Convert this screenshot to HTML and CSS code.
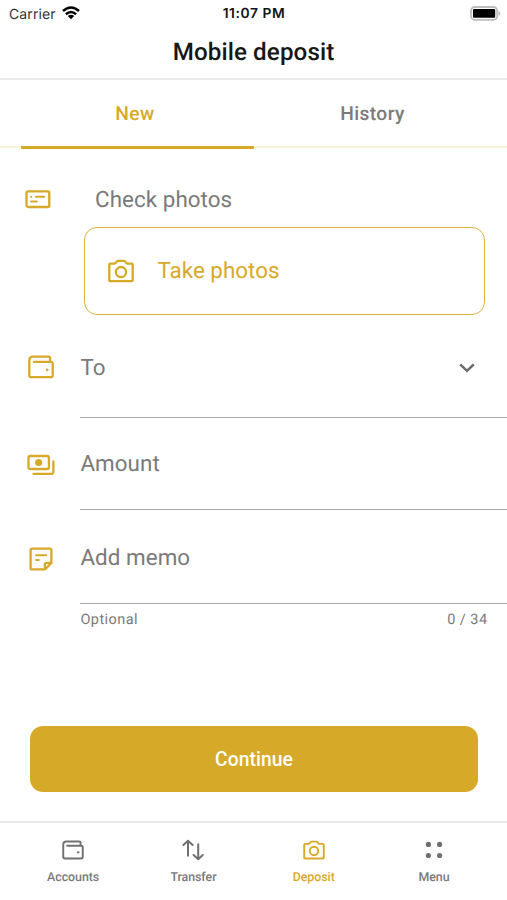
FILE: index.html
```html
<!DOCTYPE html>
<html lang="en">
<head>
<meta charset="utf-8">
<title>Mobile deposit</title>
<link rel="stylesheet" href="styles.css">
</head>
<body>
<svg class="defs" width="0" height="0" aria-hidden="true">
  <symbol id="camera" viewBox="0 0 26 24">
    <path d="M2.3 4.6H6.2Q7.6 4.6 8.2 3.3Q8.8 1.9 10.2 1.9H15.8Q17.2 1.9 17.8 3.3Q18.4 4.6 19.8 4.6H23.7Q24.7 4.6 24.7 5.6V21.2Q24.7 22.2 23.7 22.2H2.3Q1.3 22.2 1.3 21.2V5.6Q1.3 4.6 2.3 4.6Z"/>
    <circle cx="13" cy="13.1" r="5.1"/>
  </symbol>
  <symbol id="wallet" viewBox="0 0 26 24">
    <path d="M22.1 6.5V3.4Q22.1 1.7 20.4 1.7H5Q1.3 1.7 1.3 5.4V20.2Q1.3 22.2 3.3 22.2H22.7Q24.7 22.2 24.7 20.2V8.8Q24.7 6.9 22.8 6.9H6"/>
    <circle class="fill" cx="19.2" cy="14.8" r="1.4"/>
  </symbol>
</svg>
<div class="app">
  <div class="status">
    <div class="carrier">Carrier
      <svg class="wifi" width="18" height="14" viewBox="0 0 18 14"><path d="M1 5Q9-2 17 5M3.9 8.2Q9 3.8 14.1 8.2"/><path class="fill" d="M5.8 10Q9 7.4 12.2 10L9 13.3Z"/></svg>
    </div>
    <div class="time">11:07 PM</div>
    <svg class="battery" width="31" height="15" viewBox="0 0 31 15"><rect x="1" y="1" width="26.2" height="12.8" rx="3.8"/><rect class="level" x="3" y="3" width="22.2" height="8.8" rx="1"/><path class="cap" d="M28.5 5Q30.4 5.8 30.4 7.4T28.5 9.8Z"/></svg>
  </div>
  <header class="title">Mobile deposit</header>
  <nav class="tabs">
    <div class="tab active">New</div>
    <div class="tab">History</div>
  </nav>
  <main class="form">
    <div class="check-label">
      <svg class="icon" width="26" height="20" viewBox="0 0 26 20"><rect x="1.5" y="2.4" width="22.8" height="15.6" rx="1.5"/><path class="thin" d="M6.1 7.8H6.3M11 7.8H19.2M6.2 12.5H11.8"/></svg>
      <span>Check photos</span>
    </div>
    <div class="photo-button">
      <svg class="icon" width="26" height="24"><use href="#camera"/></svg>
      <span>Take photos</span>
    </div>
    <div class="row to">
      <div class="lead"><svg class="icon" width="26" height="24"><use href="#wallet"/></svg></div>
      <div class="field"><span>To</span>
        <svg class="chevron" width="16" height="10" viewBox="0 0 16 10"><path d="M1.2 1.3L8 7.8L14.8 1.3"/></svg>
      </div>
    </div>
    <div class="row amount">
      <div class="lead"><svg class="icon" width="28" height="22" viewBox="0 0 28 22"><rect x="1.5" y="2" width="20.4" height="13" rx="1.8"/><circle class="fill" cx="11.7" cy="8.5" r="3.6"/><path d="M26.4 7.5V17.8Q26.4 19.8 24.4 19.8H6.5"/></svg></div>
      <div class="field"><span>Amount</span></div>
    </div>
    <div class="row memo">
      <div class="lead"><svg class="icon" width="24" height="24" viewBox="0 0 24 24"><path d="M3.3 1.7H20.7Q22.4 1.7 22.4 3.4V16L16 22.4H3.3Q1.6 22.4 1.6 20.7V3.4Q1.6 1.7 3.3 1.7ZM22.2 15.8H17.4Q15.8 15.8 15.8 17.4V22.2"/><path class="thin" d="M7 8.2H17.2M7 13H9.8"/></svg></div>
      <div class="field"><span>Add memo</span></div>
    </div>
    <div class="helper"><span>Optional</span><span class="count">0 / 34</span></div>
    <button class="continue">Continue</button>
  </main>
  <footer class="bottom">
    <div class="item"><svg class="icon" width="22" height="20"><use href="#wallet"/></svg><span>Accounts</span></div>
    <div class="item"><svg class="icon arrows" width="22" height="22" viewBox="0 0 22 22"><path d="M6 16.7V1.8M1.4 6L6 1.8L10.6 6M16.2 5.3V20.2M11.6 16L16.2 20.2L20.8 16"/></svg><span>Transfer</span></div>
    <div class="item active"><svg class="icon" width="22" height="20"><use href="#camera"/></svg><span>Deposit</span></div>
    <div class="item"><svg class="icon dots" width="18" height="18" viewBox="0 0 18 18"><circle cx="3.4" cy="3.4" r="2.6"/><circle cx="14.6" cy="3.4" r="2.6"/><circle cx="3.4" cy="14.5" r="2.6"/><circle cx="14.6" cy="14.5" r="2.6"/></svg><span>Menu</span></div>
  </footer>
</div>
</body>
</html>
```
FILE: styles.css
```css
* { box-sizing: border-box; }
body { margin: 0; background: #fff; font-family: Roboto, sans-serif; color: #7a7a7a; text-rendering: geometricPrecision; }
.defs { display: block; }
.app { width: 507px; height: 900px; display: flex; flex-direction: column; overflow: hidden; }
svg { display: block; flex: none; fill: none; stroke: currentColor; stroke-linecap: round; stroke-linejoin: round; }
.fill { fill: currentColor; stroke: none; }
.thin { stroke-width: 2; }

.status { height: 27px; display: grid; grid-template-columns: 1fr auto 1fr; align-items: center; padding: 0 6px 0 9px; font-family: Inter, sans-serif; font-size: 14px; color: #111; }
.carrier { display: flex; align-items: center; gap: 6px; color: #333; letter-spacing: .1px; height: 18px; margin-top: 1px; }
.wifi { color: #000; stroke-width: 2.5; stroke-linecap: butt; margin-top: -3px; }
.time { font-weight: 600; font-size: 13.8px; letter-spacing: .6px; padding-right: 2px; margin-top: 1px; }
.battery { justify-self: end; stroke: #bdbdbd; stroke-width: 1.8; margin-top: -1px; }
.battery .level { fill: #000; stroke: none; }
.battery .cap { fill: #bdbdbd; stroke: none; }

.title { height: 53px; border-bottom: 2px solid #ebebeb; text-align: center; font-size: 24.2px; font-weight: 500; line-height: 50px; letter-spacing: .1px; color: #171717; }

.tabs { height: 68px; display: flex; padding: 0 15px 0 21px; background: linear-gradient(#f7f3d9, #f7f3d9) 0 66px / 100% 2px no-repeat; }
.tab { width: 233px; height: 69px; line-height: 67px; text-align: center; font-size: 19.2px; font-weight: 500; letter-spacing: .4px; }
.tab + .tab { margin-left: 2px; }
.tab.active { color: #d7a928; border-bottom: 3px solid #d7a928; border-radius: 0 0 1px 1px; padding-right: 5px; }

.form { flex: 1; padding-top: 30px; font-size: 22.4px; letter-spacing: .06px; }
.icon { color: #d7a928; stroke-width: 2.3; }
.check-label { height: 42px; display: flex; align-items: center; padding-left: 25px; gap: 44px; }
.check-label span { margin-top: 2px; }
.photo-button { margin: 7px 22px 0 84px; height: 88px; border: 1.5px solid #dab23f; border-radius: 13px; display: flex; align-items: center; padding-left: 22.5px; gap: 24px; color: #d7a928; letter-spacing: 0; }
.photo-button span { margin-top: -1px; }
.row { display: flex; }
.lead { width: 80px; display: flex; justify-content: center; align-items: center; height: 51px; padding-left: 2px; }
.field { flex: 1; height: 100%; display: flex; justify-content: space-between; border-bottom: 1.5px solid #a8a8a8; line-height: 50px; }
.field span { padding-left: .4px; }
.to { margin-top: 27px; height: 76px; }
.to .field { line-height: 52px; }
.to .lead { height: 50px; }
.amount { margin-top: 21px; height: 71px; }
.memo { margin-top: 23px; height: 71px; }
.memo .field { line-height: 51px; }
.chevron { margin: 21px 32px 0 0; stroke-width: 2.5; color: #6b6b6b; stroke-linecap: butt; stroke-linejoin: miter; }
.helper { display: flex; justify-content: space-between; padding: 7px 19.5px 0 80.4px; font-size: 14.5px; line-height: 18px; letter-spacing: .45px; }
.continue { display: block; width: 448px; height: 66px; margin: 97px 0 0 30px; padding: 0; border: 0; border-radius: 13px; background: #d7a928; color: #fff; font: 500 19.3px Roboto, sans-serif; letter-spacing: .05px; }

.bottom { height: 79px; border-top: 2px solid #ebebeb; display: grid; grid-template-columns: repeat(4, 120.3px); padding-left: 13px; align-content: start; }
.item { display: grid; grid-template-rows: 54px 20px; justify-items: center; align-items: center; font-size: 12.4px; font-weight: 500; letter-spacing: -.05px; }
.item span { line-height: 20px; margin-top: -18px; }
.item .icon { color: #707070; }
.item.active, .item.active .icon { color: #d7a928; }
.item .arrows { stroke-width: 2; }
.dots circle { fill: currentColor; stroke: none; }
```
